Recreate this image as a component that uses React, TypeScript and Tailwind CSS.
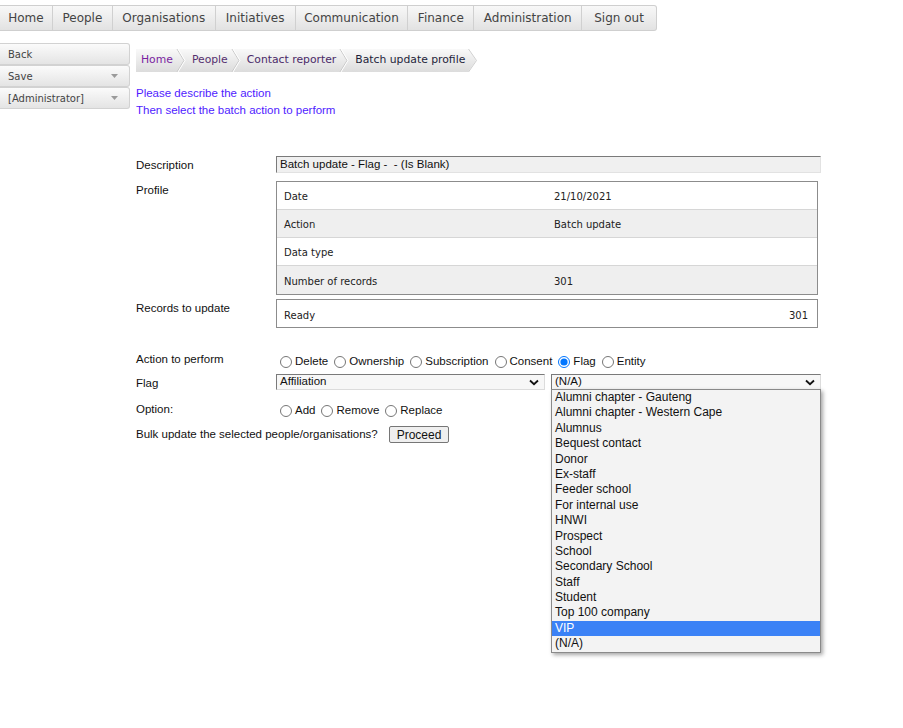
import React from 'react';

const navItems = [
    { label: 'Home', w: 'w-[53px]' },
    { label: 'People', w: 'w-[60px]' },
    { label: 'Organisations', w: 'w-[103px]' },
    { label: 'Initiatives', w: 'w-[80px]' },
    { label: 'Communication', w: 'w-[113px]' },
    { label: 'Finance', w: 'w-[66px]' },
    { label: 'Administration', w: 'w-[108px]' },
    { label: 'Sign out', w: 'w-[74px]' },
];

const crumbs = [
    { label: 'Home', color: 'text-[#7a1fa0]' },
    { label: 'People', color: 'text-[#55306f]' },
    { label: 'Contact reporter', color: 'text-[#4a2a68]' },
    { label: 'Batch update profile', color: 'text-[#1e1e3a]' },
];

const profileRows = [
    { label: 'Date', value: '21/10/2021', bg: 'bg-white' },
    { label: 'Action', value: 'Batch update', bg: 'bg-[#efefef]' },
    { label: 'Data type', value: '', bg: 'bg-white' },
    { label: 'Number of records', value: '301', bg: 'bg-[#efefef]' },
];

const flagOptions = [
    'Alumni chapter - Gauteng',
    'Alumni chapter - Western Cape',
    'Alumnus',
    'Bequest contact',
    'Donor',
    'Ex-staff',
    'Feeder school',
    'For internal use',
    'HNWI',
    'Prospect',
    'School',
    'Secondary School',
    'Staff',
    'Student',
    'Top 100 company',
    'VIP',
    '(N/A)',
];

const Chevron = () => (
    <svg width="10" height="7" viewBox="0 0 10 7" className="shrink-0">
        <path d="M1 1.5 L5 5.2 L9 1.5" fill="none" stroke="#111" strokeWidth="1.8" />
    </svg>
);

const Radio = ({ label, group, checked = false }: { label: string; group: string; checked?: boolean }) => (
    <label className="flex items-center">
        <input type="radio" name={group} defaultChecked={checked} className="ml-[4px] mr-[3px] w-[12px] h-[12px] accent-[#0075ff]" />
        <span>{label}</span>
    </label>
);

const SideButton = ({ label, menu }: { label: string; menu?: boolean }) => (
    <div className="h-[22px] flex items-center justify-between pl-[8px] pr-[11px] border border-l-0 border-[#d2d2d2] rounded-r-[3px] bg-gradient-to-b from-[#fbfbfb] to-[#e4e4e4] text-[10px] text-[#444]">
        <span>{label}</span>
        {menu && (
            <svg width="7" height="4" viewBox="0 0 7 4">
                <path d="M0 0 L7 0 L3.5 4 Z" fill="#9a9a9a" />
            </svg>
        )}
    </div>
);

const FormRow = ({ label, children, className = '' }: { label: string; children: React.ReactNode; className?: string }) => (
    <div className={`flex ${className}`}>
        <div className="w-[140px] shrink-0 leading-[18px]">{label}</div>
        {children}
    </div>
);

export default function App() {
    return (
        <div className="relative w-[903px] h-[728px] bg-white overflow-hidden">
            {/* top navigation */}
            <nav className="mt-[5px] flex h-[26px] w-[657px] border-y border-r border-[#cfcfcf] rounded-r-[3px] bg-gradient-to-b from-[#f8f8f8] to-[#e2e2e2] font-['DejaVu_Sans',Verdana,sans-serif] text-[12px] text-[#444]">
                {navItems.map((item, i) => (
                    <div
                        key={item.label}
                        className={`${item.w} flex items-center justify-center ${i < navItems.length - 1 ? 'border-r border-[#d0d0d0]' : ''}`}
                    >
                        {item.label}
                    </div>
                ))}
            </nav>

            <div className="flex mt-[12px]">
                {/* side actions */}
                <aside className="w-[130px] shrink-0 flex flex-col font-['DejaVu_Sans',Verdana,sans-serif]">
                    <SideButton label="Back" />
                    <SideButton label="Save" menu />
                    <SideButton label="[Administrator]" menu />
                </aside>

                <main className="ml-[6px] font-['Liberation_Sans',Arial,sans-serif] text-[11.5px] text-[#111]">
                    {/* breadcrumb */}
                    <div className="mt-[6px] flex h-[23px] font-['DejaVu_Sans',Verdana,sans-serif] text-[10.8px]">
                        {crumbs.map((c, i) => {
                            const last = i === crumbs.length - 1;
                            return (
                                <div key={c.label} className="flex items-stretch">
                                    <div className={`flex items-center bg-gradient-to-b from-[#f9f9f9] to-[#dcdcdc] ${i === 0 ? 'pl-[5px]' : 'pl-[6px]'} pr-[3px] ${c.color}`}>
                                        {c.label}
                                    </div>
                                    {last ? (
                                        <svg width="10" height="23" viewBox="0 0 10 23" className="shrink-0">
                                            <defs>
                                                <linearGradient id="crumbEnd" x1="0" y1="0" x2="0" y2="1">
                                                    <stop offset="0" stopColor="#f9f9f9" />
                                                    <stop offset="1" stopColor="#dcdcdc" />
                                                </linearGradient>
                                            </defs>
                                            <path d="M0 0 L8 11.5 L0 23 Z" fill="url(#crumbEnd)" />
                                            <path d="M0.5 0 L8.5 11.5 L0.5 23" fill="none" stroke="#cfcfcf" strokeWidth="1" />
                                        </svg>
                                    ) : (
                                        <div className="flex bg-gradient-to-b from-[#f9f9f9] to-[#dcdcdc]">
                                            <svg width="10" height="23" viewBox="0 0 10 23" className="shrink-0">
                                                <path d="M1 0 L8 11.5 L1 23" fill="none" stroke="#c8c8c8" strokeWidth="1" />
                                                <path d="M2 0 L9 11.5 L2 23" fill="none" stroke="#ffffff" strokeWidth="1" />
                                            </svg>
                                        </div>
                                    )}
                                </div>
                            );
                        })}
                    </div>

                    {/* hints */}
                    <div className="mt-[13px] leading-[17px] text-[#4f1cff]">
                        <div>Please describe the action</div>
                        <div>Then select the batch action to perform</div>
                    </div>

                    {/* form */}
                    <FormRow label="Description" className="mt-[37px]">
                        <div className="w-[545px] h-[17px] flex items-center pl-[3px] border-t border-l border-[#7a7a7a] border-b-[#e2e2e2] border-r-[#e2e2e2] border-b border-r bg-[#f0f0f0]">
                            Batch update - Flag -&nbsp; - (Is Blank)
                        </div>
                    </FormRow>

                    <FormRow label="Profile" className="mt-[7px]">
                        <div className="w-[542px] border border-[#8c8c8c] font-['DejaVu_Sans',Verdana,sans-serif] text-[10px] text-[#222]">
                            {profileRows.map((row, i) => (
                                <div
                                    key={row.label}
                                    className={`flex items-center h-[28px] pt-[2px] ${row.bg} ${i < profileRows.length - 1 ? 'border-b border-[#d6d6d6]' : ''}`}
                                >
                                    <div className="w-[277px] pl-[7px]">{row.label}</div>
                                    <div>{row.value}</div>
                                </div>
                            ))}
                        </div>
                    </FormRow>

                    <FormRow label="Records to update" className="mt-[4px]">
                        <div className="w-[542px] h-[29px] flex items-center justify-between pt-[3px] pl-[7px] pr-[9px] border border-[#8c8c8c] font-['DejaVu_Sans',Verdana,sans-serif] text-[10px] text-[#222]">
                            <span>Ready</span>
                            <span>301</span>
                        </div>
                    </FormRow>

                    <FormRow label="Action to perform" className="mt-[22px]">
                        <div className="mt-[3px] h-[18px] flex items-center gap-[2px]">
                            <Radio group="action" label="Delete" />
                            <Radio group="action" label="Ownership" />
                            <Radio group="action" label="Subscription" />
                            <Radio group="action" label="Consent" />
                            <Radio group="action" label="Flag" checked />
                            <Radio group="action" label="Entity" />
                        </div>
                    </FormRow>

                    <FormRow label="Flag" className="mt-[3px]">
                        <div className="flex">
                            <div className="w-[269px] h-[16px] flex items-center justify-between pl-[3px] pr-[5px] border border-[#7a7a7a] border-b-[#dcdcdc] border-r-[#dcdcdc] bg-[#f7f7f7]">
                                <span>Affiliation</span>
                                <Chevron />
                            </div>
                            <div className="relative ml-[6px]">
                                <div className="w-[270px] h-[16px] flex items-center justify-between pl-[3px] pr-[5px] border border-[#7a7a7a] border-b-[#dcdcdc] border-r-[#dcdcdc] bg-[#f7f7f7]">
                                    <span>(N/A)</span>
                                    <Chevron />
                                </div>
                                {/* open list */}
                                <ul className="absolute left-0 top-[15px] z-10 w-[270px] border border-[#8a8a8a] bg-[#f3f3f3] shadow-[2px_2px_4px_rgba(0,0,0,0.35)] text-[12px]">
                                    {flagOptions.map(opt => (
                                        <li
                                            key={opt}
                                            className={`h-[15.4px] leading-[15.4px] pl-[3px] ${opt === 'VIP' ? 'bg-[#3b82f6] text-white' : 'text-[#111]'}`}
                                        >
                                            {opt}
                                        </li>
                                    ))}
                                </ul>
                            </div>
                        </div>
                    </FormRow>

                    <FormRow label="Option:" className="mt-[8px]">
                        <div className="mt-[2px] h-[18px] flex items-center gap-[2px]">
                            <Radio group="option" label="Add" />
                            <Radio group="option" label="Remove" />
                            <Radio group="option" label="Replace" />
                        </div>
                    </FormRow>

                    <div className="mt-[5px] h-[19px] flex items-center">
                        <span>Bulk update the selected people/organisations?</span>
                        <button className="ml-[11px] h-[17px] px-[7px] flex items-center border border-[#767676] rounded-[2px] bg-[#efefef] text-[12px] text-[#111]">
                            Proceed
                        </button>
                    </div>
                </main>
            </div>
        </div>
    );
}
